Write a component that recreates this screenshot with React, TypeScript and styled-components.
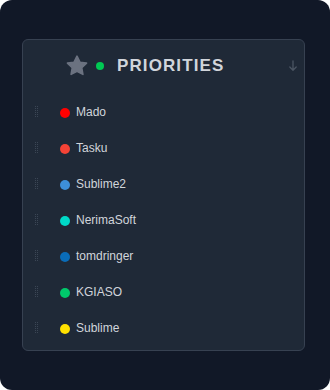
import React from "react";
import styled, { createGlobalStyle } from "styled-components";

const Global = createGlobalStyle`
  html, body { margin: 0; padding: 0; background: #ffffff; }
  body { font-family: "Liberation Sans", Arial, sans-serif; }
`;

const Frame = styled.div`
  width: 330px;
  height: 390px;
  box-sizing: border-box;
  background: #111827;
  border-radius: 12px;
  padding: 39px 25px 0 22px;
`;

const Card = styled.section`
  box-sizing: border-box;
  width: 283px;
  height: 312px;
  background: #1f2937;
  border: 1px solid #374151;
  border-radius: 6px;
  display: flex;
  flex-direction: column;
`;

const Header = styled.header`
  height: 52px;
  display: flex;
  align-items: center;
  padding: 0 6px 0 42px;
`;

const Star = styled.svg`
  width: 24px;
  height: 24px;
  flex: none;
`;

const StatusDot = styled.span`
  width: 8px;
  height: 8px;
  border-radius: 50%;
  background: #00c853;
  margin-left: 7px;
  flex: none;
`;

const Title = styled.h2`
  margin: 0 0 0 13px;
  font-size: 17px;
  font-weight: 700;
  letter-spacing: 1.1px;
  color: #d1d5db;
  flex: 1;
`;

const SortIcon = styled.svg`
  width: 10px;
  height: 12px;
  flex: none;
`;

const List = styled.ul`
  list-style: none;
  margin: 2px 0 0;
  padding: 0;
`;

const Row = styled.li`
  height: 36px;
  display: flex;
  align-items: center;
  padding-left: 12px;
`;

const Handle = styled.svg`
  width: 4px;
  height: 12px;
  flex: none;
`;

const Dot = styled.span<{ $color: string }>`
  width: 10px;
  height: 10px;
  border-radius: 50%;
  background: ${(p) => p.$color};
  margin-left: 21px;
  margin-top: 1px;
  flex: none;
`;

const Label = styled.span`
  margin-left: 6px;
  font-size: 12px;
  color: #d1d5db;
`;

const items = [
  { name: "Mado", color: "#ff0000" },
  { name: "Tasku", color: "#f44336" },
  { name: "Sublime2", color: "#3d8fd9" },
  { name: "NerimaSoft", color: "#00d9c8" },
  { name: "tomdringer", color: "#0a6cb8" },
  { name: "KGIASO", color: "#00c96b" },
  { name: "Sublime", color: "#ffe100" },
];

const DragHandle = () => (
  <Handle viewBox="0 0 4 12">
    {[0, 2, 4, 6, 8, 10].map((y) => (
      <React.Fragment key={y}>
        <rect x="0" y={y} width="1" height="1" fill="#3b4655" />
        <rect x="2" y={y} width="1" height="1" fill="#3b4655" />
      </React.Fragment>
    ))}
  </Handle>
);

export default function App() {
  return (
    <>
      <Global />
      <Frame>
        <Card>
          <Header>
            <Star viewBox="0 0 24 24">
              <path
                d="M12 2.2l2.95 6 6.6.95-4.8 4.65 1.15 6.6L12 17.3l-5.9 3.1 1.15-6.6-4.8-4.65 6.6-.95z"
                fill="#6b7280"
                stroke="#6b7280"
                strokeWidth="1.6"
                strokeLinejoin="round"
              />
            </Star>
            <StatusDot />
            <Title>PRIORITIES</Title>
            <SortIcon viewBox="0 0 10 12">
              <path
                d="M5 1v9M1.8 7l3.2 3.2L8.2 7"
                fill="none"
                stroke="#4b5563"
                strokeWidth="1.3"
                strokeLinecap="round"
                strokeLinejoin="round"
              />
            </SortIcon>
          </Header>
          <List>
            {items.map((it) => (
              <Row key={it.name}>
                <DragHandle />
                <Dot $color={it.color} />
                <Label>{it.name}</Label>
              </Row>
            ))}
          </List>
        </Card>
      </Frame>
    </>
  );
}
